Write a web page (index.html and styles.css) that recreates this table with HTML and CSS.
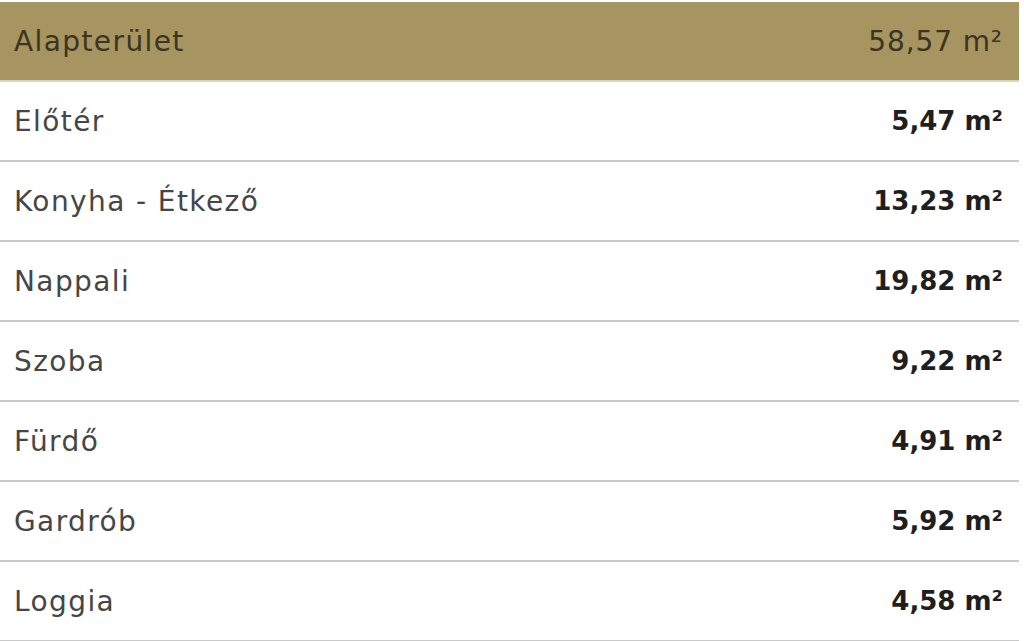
FILE: index.html
```html
<!DOCTYPE html>
<html lang="hu">
<head>
<meta charset="utf-8">
<link rel="stylesheet" href="styles.css">
</head>
<body>
<div class="sheet">
  <div class="row head"><span class="label">Alapterület</span><span class="value">58,57 m²</span></div>
  <div class="row"><span class="label">Előtér</span><span class="value">5,47 m²</span></div>
  <div class="row"><span class="label">Konyha - Étkező</span><span class="value">13,23 m²</span></div>
  <div class="row"><span class="label">Nappali</span><span class="value">19,82 m²</span></div>
  <div class="row"><span class="label">Szoba</span><span class="value">9,22 m²</span></div>
  <div class="row"><span class="label">Fürdő</span><span class="value">4,91 m²</span></div>
  <div class="row"><span class="label">Gardrób</span><span class="value">5,92 m²</span></div>
  <div class="row"><span class="label">Loggia</span><span class="value">4,58 m²</span></div>
  <div class="mark"><div class="mark-big">NAGYERDEI</div><div class="mark-small">INGATLANIRODA</div></div>
</div>
</body>
</html>
```
FILE: styles.css
```css
html, body {
  margin: 0;
  padding: 0;
  background: #ffffff;
}
.sheet {
  position: relative;
  width: 1019px;
  padding-top: 2px;
  font-family: "DejaVu Sans", sans-serif;
}
.row {
  display: flex;
  justify-content: space-between;
  align-items: center;
  height: 78px;
  padding: 0 16px 0 14px;
  border-bottom: 2px solid #c9c9c9;
}
.row .label {
  color: #464646;
  font-size: 28px;
  letter-spacing: 1.4px;
}
.row .value {
  color: #1f1f1f;
  font-size: 26px;
  font-weight: 700;
}
.row.head {
  background: #a69560;
  border-bottom-color: #d9d3bf;
}
.row.head .label,
.row.head .value {
  color: #3b3421;
  font-weight: 400;
}
.row.head .value {
  font-size: 28px;
  letter-spacing: 0.9px;
}
.mark {
  position: absolute;
  left: 415px;
  top: 286px;
  width: 195px;
  color: rgba(255, 255, 255, 0.85);
  text-align: center;
}
.mark-big {
  font-size: 34px;
  font-weight: 700;
  line-height: 36px;
}
.mark-small {
  font-size: 18px;
  font-weight: 700;
  line-height: 20px;
}
```
